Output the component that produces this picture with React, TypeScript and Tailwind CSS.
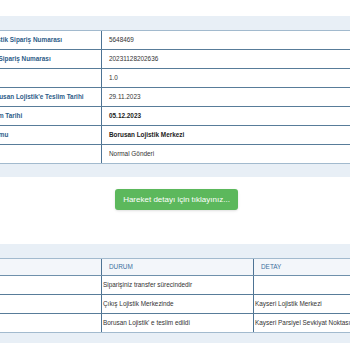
import React from 'react';

const details = [
  { label: 'Borusan Lojistik Sipariş Numarası', value: '5648469' },
  { label: 'Hepsiburada Sipariş Numarası', value: '20231128202636' },
  { label: 'Versiyon', value: '1.0' },
  { label: "Ürünlerin Borusan Lojistik'e Teslim Tarihi", value: '29.11.2023' },
  { label: 'Tahmini Teslim Tarihi', value: '05.12.2023', bold: true },
  { label: 'Ürünün Konumu', value: 'Borusan Lojistik Merkezi', bold: true },
  { label: 'Gönderi Tipi', value: 'Normal Gönderi' },
];

const moves = [
  { date: '', status: 'Siparişiniz transfer sürecindedir', detail: '' },
  { date: '', status: 'Çıkış Lojistik Merkezinde', detail: 'Kayseri Lojistik Merkezi' },
  { date: '', status: "Borusan Lojistik' e teslim edildi", detail: 'Kayseri Parsiyel Sevkiyat Noktası' },
];

const App = () => {
  return (
    <div
      className="w-[350px] h-[350px] overflow-hidden bg-white text-[6.4px] leading-none text-[#333]"
      style={{ fontFamily: '"Liberation Sans", Arial, sans-serif' }}
    >
      <div className="pt-[16px]">
        {/* order info */}
        <div className="bg-[#e8eff6] pt-[14px] pb-[13px] overflow-hidden">
          <div className="-ml-[49px] w-[460px] bg-white border-t border-[#a2bace]">
            {details.map((row, i) => (
              <div
                key={i}
                className={`flex h-[19px] border-b ${i === details.length - 1 ? 'border-[#a2bace]' : 'border-[#587c99]'}`}
              >
                <div className="w-[151px] shrink-0 flex items-center pl-[7px] border-r border-[#4d7394] font-bold text-[#2d5c88] whitespace-nowrap overflow-hidden">
                  {row.label}
                </div>
                <div className={`flex-1 flex items-center pl-[7px] whitespace-nowrap ${row.bold ? 'font-bold text-[#222]' : ''}`}>
                  {row.value}
                </div>
              </div>
            ))}
          </div>
        </div>

        <div className="flex justify-center pt-[12px] pb-[34px] pl-[3px]">
          <button className="h-[21px] px-[8px] rounded-[3px] bg-[#5cb85c] text-white text-[8px] leading-none shadow-sm">
            Hareket detayı için tıklayınız...
          </button>
        </div>

        {/* movements */}
        <div className="bg-[#e8eff6] pt-[14px] pb-[10px] overflow-hidden">
          <div className="-ml-[49px] w-[460px] border-t border-[#a2bace]">
            <div className="flex h-[17px] bg-[#f3f6fa] border-b border-[#6f90ab] text-[#3d6fa0]">
              <div className="w-[151px] shrink-0 flex items-center pl-[7px] border-r border-[#4d7394]">TARİH</div>
              <div className="w-[152px] shrink-0 flex items-center pl-[7px] border-r border-[#4d7394]">DURUM</div>
              <div className="flex-1 flex items-center pl-[7px]">DETAY</div>
            </div>
            {moves.map((row, i) => (
              <div
                key={i}
                className={`flex h-[19px] bg-white border-b ${i === moves.length - 1 ? 'border-[#a2bace]' : 'border-[#587c99]'}`}
              >
                <div className="w-[151px] shrink-0 flex items-center pl-[1px] border-r border-[#4d7394]">{row.date}</div>
                <div className="w-[152px] shrink-0 flex items-center pl-[1px] border-r border-[#4d7394] whitespace-nowrap">
                  {row.status}
                </div>
                <div className="flex-1 flex items-center pl-[1px] whitespace-nowrap">{row.detail}</div>
              </div>
            ))}
          </div>
        </div>
      </div>
    </div>
  );
};

export default App;
